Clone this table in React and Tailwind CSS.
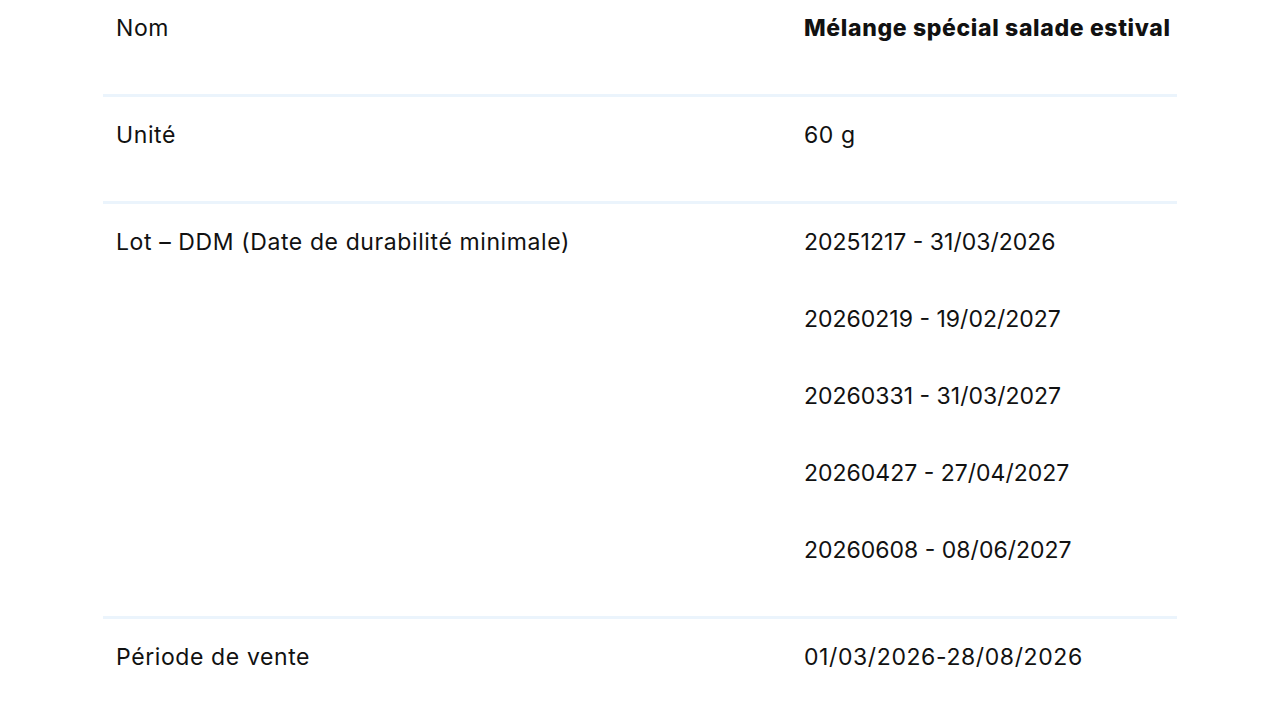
const rows = [
  { label: 'Nom', values: ['Mélange spécial salade estival'], strong: true },
  { label: 'Unité', values: ['60 g'] },
  {
    label: 'Lot – DDM (Date de durabilité minimale)',
    values: [
      '20251217 - 31/03/2026',
      '20260219 - 19/02/2027',
      '20260331 - 31/03/2027',
      '20260427 - 27/04/2027',
      '20260608 - 08/06/2027',
    ],
    tight: true,
  },
  { label: 'Période de vente', values: ['01/03/2026-28/08/2026'] },
]

export default function App() {
  return (
    <div className="min-h-[720px] bg-white overflow-hidden font-['Inter',sans-serif] text-[#111] text-[23px] tracking-[0.6px]">
      <div className="mx-[103px] -mt-[10px]">
        {rows.map((row, i) => (
          <div
            key={i}
            className={`grid grid-cols-[688px_1fr] px-[13px] pt-[21px] pb-[49px] ${i < rows.length - 1 ? 'border-b-[3px] border-[#ebf4fc]' : ''}`}
          >
            <div className="leading-[34px] whitespace-nowrap">{row.label}</div>
            <div className="flex flex-col gap-[43px]">
              {row.values.map((v, j) => (
                <p
                  key={j}
                  className={`leading-[34px] whitespace-nowrap ${row.strong ? 'font-extrabold tracking-[0.65px]' : ''} ${row.tight ? 'tracking-[0px]' : ''}`}
                >
                  {v}
                </p>
              ))}
            </div>
          </div>
        ))}
      </div>
    </div>
  )
}
